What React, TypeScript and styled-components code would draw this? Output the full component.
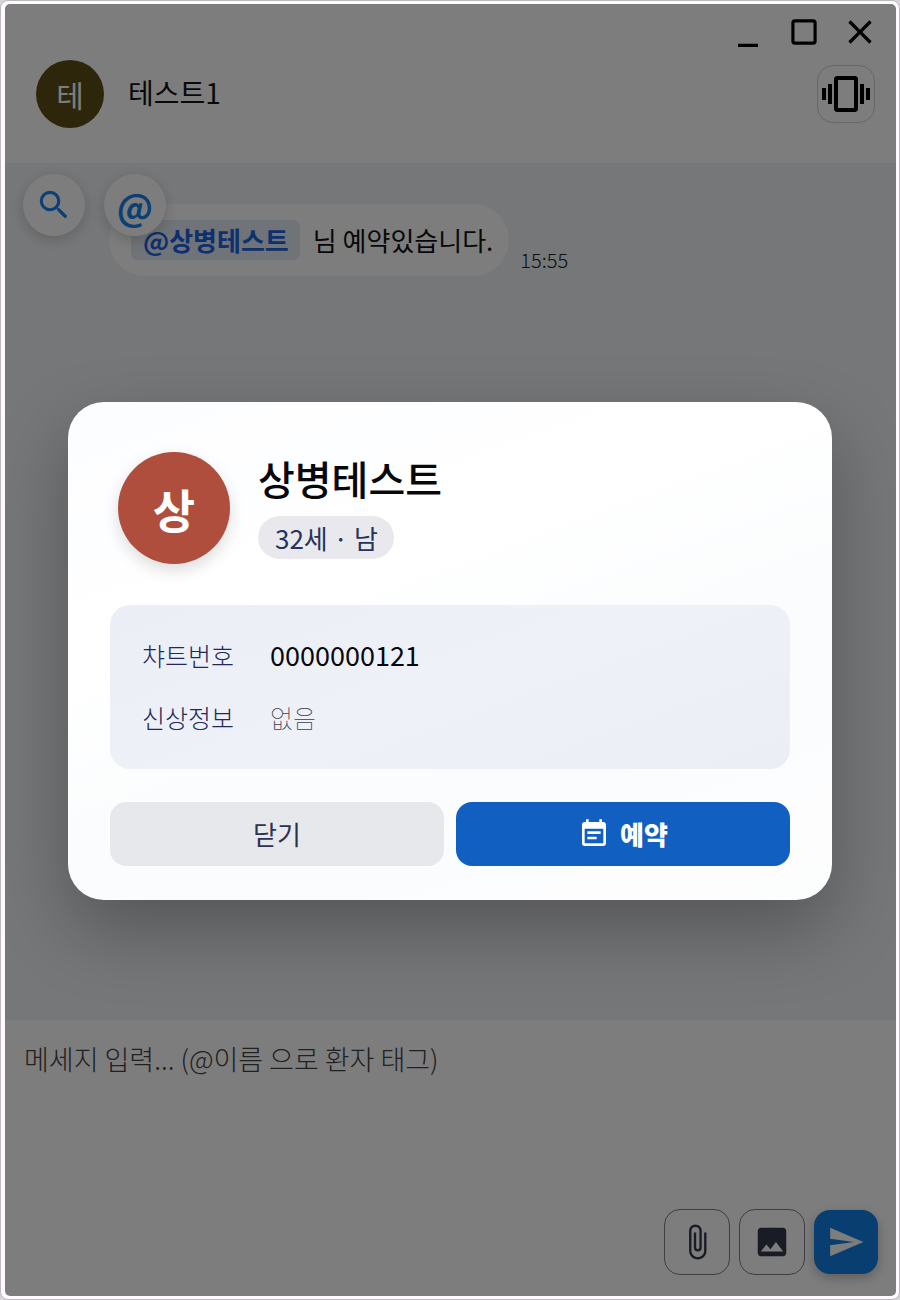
import React from 'react';
import styled, { createGlobalStyle } from 'styled-components';
import {
  MdAttachFile,
  MdClose,
  MdCropSquare,
  MdEventNote,
  MdImage,
  MdMinimize,
  MdSearch,
  MdSend,
  MdVibration,
} from 'react-icons/md';

const GlobalStyle = createGlobalStyle`
  *, *::before, *::after { box-sizing: border-box; }
  body {
    margin: 0;
    background: #d8d5d9;
    font-family: "Noto Sans CJK KR", "Noto Sans", sans-serif;
    color: #111;
  }
  button, textarea { font: inherit; }
  button { cursor: pointer; border: 0; padding: 0; }
  h1, h2, p, dl, dt, dd { margin: 0; }
`;

const Window = styled.div`
  display: flex;
  flex-direction: column;
  min-height: 100vh;
  padding: 3px 3px 3px 4px;
  background: #fdfbfe;
  border: 1px solid #bdb8be;
  border-radius: 8px;
`;

const Surface = styled.div`
  position: relative;
  flex: 1;
  display: flex;
  flex-direction: column;
  border-radius: 5px;
  overflow: hidden;
  background: #fff;
`;

const Header = styled.header`
  padding-bottom: 35px;
`;

const WindowControls = styled.div`
  display: flex;
  justify-content: flex-end;
  gap: 16px;
  padding: 8px 16px;
`;

const ControlButton = styled.button`
  display: grid;
  place-items: center;
  width: 40px;
  height: 40px;
  background: none;
  color: #000;
`;

const Profile = styled.div`
  display: flex;
  align-items: center;
  gap: 24px;
  padding: 0 21px 0 31px;
`;

const Avatar = styled.div<{ $size: number; $color: string; $font: number }>`
  display: grid;
  place-items: center;
  flex: none;
  width: ${(p) => p.$size}px;
  height: ${(p) => p.$size}px;
  border-radius: 50%;
  background: ${(p) => p.$color};
  color: #fff;
  font-size: ${(p) => p.$font}px;
  line-height: 1;
`;

const ContactName = styled.h1`
  flex: 1;
  padding-bottom: 4px;
  font-size: 28px;
  font-weight: 400;
  line-height: 40px;
`;

const NudgeButton = styled.button`
  display: grid;
  place-items: center;
  width: 58px;
  height: 58px;
  border: 1px solid #d2d2d2;
  border-radius: 16px;
  background: none;
  color: #000;
`;

const Chat = styled.main`
  position: relative;
  flex: 1;
  padding: 41px 24px 24px 104px;
  background: #f0f3f7;
`;

const FloatingTools = styled.div`
  position: absolute;
  top: 11px;
  left: 18px;
  display: flex;
  gap: 19px;
`;

const FloatingButton = styled.button`
  display: grid;
  place-items: center;
  width: 62px;
  height: 62px;
  border-radius: 50%;
  background: #fff;
  color: #1684ee;
  font-size: 36px;
  font-weight: 700;
  line-height: 1;
  box-shadow: 0 4px 14px rgba(0, 0, 0, 0.18);
`;

const Message = styled.div`
  display: flex;
  align-items: flex-end;
  gap: 11px;
`;

const Bubble = styled.p`
  display: flex;
  align-items: center;
  gap: 13px;
  min-height: 72px;
  padding: 0 16px 0 22px;
  border-radius: 36px;
  background: #fff;
  font-size: 26px;
  line-height: 40px;
`;

const Mention = styled.a`
  padding: 0 11px 0 12px;
  border-radius: 6px;
  background: #e4ebf3;
  color: #1f62e0;
  font-weight: 700;
  text-decoration: none;
`;

const Time = styled.time`
  font-size: 20px;
  font-weight: 300;
  line-height: 32px;
  color: #222;
`;

const Composer = styled.form`
  display: flex;
  flex-direction: column;
  background: #fff;
`;

const MessageInput = styled.textarea`
  height: 189px;
  padding: 20px 19px;
  border: 0;
  outline: 0;
  resize: none;
  background: none;
  font-size: 27px;
  font-weight: 300;
  line-height: 38px;
  &::placeholder { color: #444; opacity: 1; }
`;

const Actions = styled.div`
  display: flex;
  justify-content: flex-end;
  align-items: center;
  gap: 9px;
  padding: 0 18px 21px;
`;

const ActionButton = styled.button<{ $primary?: boolean }>`
  display: grid;
  place-items: center;
  width: ${(p) => (p.$primary ? 64 : 66)}px;
  height: ${(p) => (p.$primary ? 64 : 66)}px;
  border: ${(p) => (p.$primary ? '0' : '1px solid #7d828c')};
  border-radius: 16px;
  background: ${(p) => (p.$primary ? '#1480e4' : '#fff')};
  color: ${(p) => (p.$primary ? '#fff' : '#343a4c')};
  box-shadow: ${(p) => (p.$primary ? '0 4px 12px rgba(0, 0, 0, 0.25)' : 'none')};
`;

const Backdrop = styled.div`
  position: absolute;
  inset: 0;
  display: grid;
  align-items: center;
  padding: 2px 64px 0 63px;
  background: rgba(0, 0, 0, 0.51);
`;

const Card = styled.section`
  padding: 50px 42px 34px;
  border-radius: 36px;
  background: linear-gradient(160deg, #fcfdff 0%, #ffffff 35%, #fafcfd 60%, #fdfdfd 100%);
  box-shadow: 0 30px 72px rgba(0, 0, 0, 0.28);
`;

const Patient = styled.div`
  display: flex;
  align-items: center;
  gap: 28px;
  padding: 0 8px;
`;

const PatientAvatar = styled(Avatar)`
  font-weight: 700;
  box-shadow: 0 6px 16px rgba(0, 0, 0, 0.14);
`;

const PatientText = styled.div`
  display: flex;
  flex-direction: column;
  align-items: flex-start;
  gap: 14px;
  padding-bottom: 4px;
`;

const PatientName = styled.h2`
  font-size: 40px;
  font-weight: 500;
  line-height: 48px;
  color: #08080a;
`;

const Pill = styled.span`
  padding: 0 16px 0 17px;
  border-radius: 22px;
  background: #e9e9ed;
  color: #26345c;
  font-size: 26px;
  line-height: 43px;
`;

const Details = styled.dl`
  display: grid;
  grid-template-columns: 96px 1fr;
  gap: 24px 32px;
  margin: 41px 0 33px;
  padding: 31px 32px 33px;
  border-radius: 20px;
  background: linear-gradient(160deg, #ebeff5 0%, #eef2f8 50%, #ebeef4 100%);
  line-height: 38px;
`;

const Label = styled.dt`
  font-size: 25px;
  font-weight: 300;
  color: #23285c;
`;

const Value = styled.dd<{ $empty?: boolean }>`
  font-size: ${(p) => (p.$empty ? 25 : 27)}px;
  font-weight: ${(p) => (p.$empty ? 100 : 400)};
  color: ${(p) => (p.$empty ? '#3c3c4c' : '#08080c')};
`;

const CardActions = styled.div`
  display: grid;
  grid-template-columns: 1fr 1fr;
  gap: 12px;
`;

const CardButton = styled.button<{ $primary?: boolean }>`
  display: flex;
  align-items: center;
  justify-content: center;
  gap: 10px;
  height: 64px;
  border-radius: 16px;
  background: ${(p) => (p.$primary ? '#115fc0' : '#e7e8ec')};
  color: ${(p) => (p.$primary ? '#fff' : '#2a3350')};
  font-size: 26px;
  font-weight: ${(p) => (p.$primary ? 900 : 400)};
  line-height: 40px;
`;

export default function App() {
  return (
    <>
      <GlobalStyle />
      <Window>
        <Surface>
          <Header>
            <WindowControls>
              <ControlButton type="button" aria-label="최소화"><MdMinimize size={40} /></ControlButton>
              <ControlButton type="button" aria-label="최대화"><MdCropSquare size={38} /></ControlButton>
              <ControlButton type="button" aria-label="창 닫기"><MdClose size={40} /></ControlButton>
            </WindowControls>
            <Profile>
              <Avatar $size={68} $color="#5c4e16" $font={30}>테</Avatar>
              <ContactName>테스트1</ContactName>
              <NudgeButton type="button" aria-label="알림 보내기"><MdVibration size={48} /></NudgeButton>
            </Profile>
          </Header>

          <Chat>
            <Message>
              <Bubble>
                <Mention href="#patient">@상병테스트</Mention>
                <span>님 예약있습니다.</span>
              </Bubble>
              <Time>15:55</Time>
            </Message>
            <FloatingTools>
              <FloatingButton type="button" aria-label="검색"><MdSearch size={38} /></FloatingButton>
              <FloatingButton type="button">@</FloatingButton>
            </FloatingTools>
          </Chat>

          <Composer onSubmit={(e) => e.preventDefault()}>
            <MessageInput aria-label="메세지" placeholder="메세지 입력... (@이름 으로 환자 태그)" />
            <Actions>
              <ActionButton type="button" aria-label="파일 첨부"><MdAttachFile size={38} /></ActionButton>
              <ActionButton type="button" aria-label="이미지 첨부"><MdImage size={38} /></ActionButton>
              <ActionButton type="submit" $primary aria-label="보내기"><MdSend size={38} /></ActionButton>
            </Actions>
          </Composer>

          <Backdrop>
            <Card role="dialog" aria-modal="true" aria-labelledby="patient-name" id="patient">
              <Patient>
                <PatientAvatar $size={112} $color="#af4e3c" $font={46}>상</PatientAvatar>
                <PatientText>
                  <PatientName id="patient-name">상병테스트</PatientName>
                  <Pill>32세 · 남</Pill>
                </PatientText>
              </Patient>
              <Details>
                <Label>챠트번호</Label>
                <Value>0000000121</Value>
                <Label>신상정보</Label>
                <Value $empty>없음</Value>
              </Details>
              <CardActions>
                <CardButton type="button">닫기</CardButton>
                <CardButton type="button" $primary><MdEventNote size={32} />예약</CardButton>
              </CardActions>
            </Card>
          </Backdrop>
        </Surface>
      </Window>
    </>
  );
}
